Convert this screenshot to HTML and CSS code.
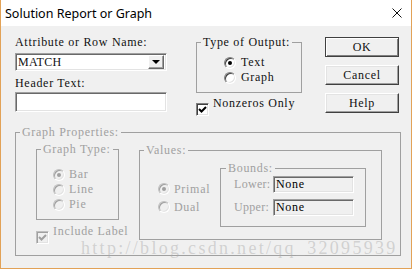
FILE: index.html
```html
<!DOCTYPE html>
<html lang="en">
<head>
  <meta charset="UTF-8" />
  <title>Solution Report or Graph</title>
  <link rel="stylesheet" href="styles.css">
</head>
<body>
  <div class="window">
    <div class="titlebar">
      <span>Solution Report or Graph</span>
      <svg class="close" width="10" height="10" viewBox="0 0 10 10">
        <path d="M0.5 0.5 L9.5 9.5 M9.5 0.5 L0.5 9.5" stroke="#111" stroke-width="1" fill="none"/>
      </svg>
    </div>

    <div class="client">
      <div class="top">
        <div class="col-left">
          <div class="lbl">Attribute or Row Name:</div>
          <div class="combo sunken">
            <span class="combo-text">MATCH</span>
            <span class="drop"><span class="tri"></span></span>
          </div>
          <div class="lbl lbl-header">Header Text:</div>
          <div class="textbox sunken"></div>
        </div>

        <div class="col-mid">
          <fieldset class="group out">
            <legend>Type of Output:</legend>
            <div class="out-body">
              <div class="opt"><span class="radio on"></span>Text</div>
              <div class="opt"><span class="radio"></span>Graph</div>
            </div>
          </fieldset>
          <div class="check-row">
            <span class="check on">
              <svg width="9" height="9" viewBox="0 0 9 9"><path d="M1 4 L3.5 6.5 L8 2" stroke="#000" stroke-width="2" fill="none"/></svg>
            </span>Nonzeros Only
          </div>
        </div>

        <div class="col-btn">
          <div class="btn default">OK</div>
          <div class="btn">Cancel</div>
          <div class="btn">Help</div>
        </div>
      </div>

      <fieldset class="group graph disabled">
        <legend>Graph Properties:</legend>
        <div class="graph-body">
          <div class="gcol">
            <fieldset class="group gtype">
              <legend>Graph Type:</legend>
              <div class="gtype-body">
                <div class="opt"><span class="radio on"></span>Bar</div>
                <div class="opt"><span class="radio"></span>Line</div>
                <div class="opt"><span class="radio"></span>Pie</div>
              </div>
            </fieldset>
            <div class="check-row inc">
              <span class="check on">
                <svg width="9" height="9" viewBox="0 0 9 9"><path d="M1 4 L3.5 6.5 L8 2" stroke="#a0a0a0" stroke-width="2" fill="none"/></svg>
              </span>Include Label
            </div>
          </div>

          <fieldset class="group values">
            <legend>Values:</legend>
            <div class="values-body">
              <div class="vradios">
                <div class="opt"><span class="radio on"></span>Primal</div>
                <div class="opt"><span class="radio"></span>Dual</div>
              </div>
              <fieldset class="group bounds">
                <legend>Bounds:</legend>
                <div class="bounds-body">
                  <div class="brow"><span class="blbl">Lower:</span><span class="field sunken">None</span></div>
                  <div class="brow"><span class="blbl">Upper:</span><span class="field sunken">None</span></div>
                </div>
              </fieldset>
            </div>
          </fieldset>
        </div>
      </fieldset>
    </div>

    <div class="watermark">http://blog.csdn.net/qq_32095939</div>
  </div>
</body>
</html>
```

FILE: styles.css
```css
* {
  box-sizing: border-box;
}

body {
  margin: 0;
  width: 412px;
  height: 269px;
  background: #fff;
  font-family: "Liberation Serif", serif;
  font-size: 12px;
  letter-spacing: 0.7px;
  color: #111;
}

.window {
  position: relative;
  width: 412px;
  height: 269px;
  border: 1px solid #e2a257;
  border-top: none;
  background: #f0f0f0;
  display: flex;
  flex-direction: column;
}

.titlebar {
  height: 26px;
  flex: none;
  background: #fff;
  display: flex;
  align-items: center;
  justify-content: space-between;
  padding: 0 9px 0 4px;
  font-family: "Noto Sans", sans-serif;
  font-size: 12.5px;
  letter-spacing: 0;
  color: #000;
}

.client {
  flex: 1;
  padding: 10px 11px 0 14px;
}

.top {
  display: flex;
  align-items: flex-start;
}

.col-left {
  width: 152px;
}

.lbl {
  line-height: 13px;
  height: 13px;
  white-space: pre;
}

.lbl-header {
  margin-top: 6px;
}

.sunken {
  border: 1px solid;
  border-color: #a0a0a0 #fff #fff #a0a0a0;
  box-shadow: inset 1px 1px #696969, inset -1px -1px #e3e3e3;
  background: #fff;
}

.combo {
  margin-top: 4px;
  height: 18px;
  display: flex;
  align-items: center;
  padding: 2px;
}

.combo-text {
  flex: 1;
  line-height: 14px;
  letter-spacing: 0.3px;
}

.drop {
  width: 16px;
  height: 14px;
  background: #f0f0f0;
  border: 1px solid;
  border-color: #fff #696969 #696969 #fff;
  box-shadow: inset -1px -1px #a0a0a0;
  display: flex;
  align-items: center;
  justify-content: center;
}

.tri {
  width: 0;
  height: 0;
  border-left: 4px solid transparent;
  border-right: 4px solid transparent;
  border-top: 4px solid #000;
}

.textbox {
  margin-top: 2px;
  height: 20px;
}

.col-mid {
  margin-left: 29px;
  width: 106px;
}

.group {
  margin: 0;
  padding: 0;
  min-width: 0;
  border: 1px solid #a0a0a0;
}

.group legend {
  padding: 0 2px;
  margin-left: 4px;
  line-height: 13px;
}

.out-body {
  padding: 6px 0 7px 27px;
}

.opt {
  display: flex;
  align-items: center;
  gap: 5px;
  height: 15px;
  white-space: pre;
}

.radio {
  width: 12px;
  height: 12px;
  border-radius: 50%;
  border: 1px solid;
  border-color: #808080 #fff #fff #808080;
  box-shadow: inset 1px 1px #404040, inset -1px -1px #e3e3e3;
  background: #fff;
  display: flex;
  align-items: center;
  justify-content: center;
  flex: none;
}

.radio.on::after {
  content: "";
  width: 4px;
  height: 4px;
  border-radius: 50%;
  background: #000;
}

.check-row {
  margin-top: 10px;
  display: flex;
  align-items: center;
  gap: 4px;
  height: 13px;
  line-height: 13px;
  white-space: pre;
}

.check {
  width: 13px;
  height: 13px;
  border: 1px solid;
  border-color: #808080 #fff #fff #808080;
  box-shadow: inset 1px 1px #404040, inset -1px -1px #e3e3e3;
  background: #fff;
  display: flex;
  align-items: center;
  justify-content: center;
  flex: none;
}

.col-btn {
  margin-left: auto;
  margin-right: 1px;
  width: 74px;
  padding-top: 1px;
  display: flex;
  flex-direction: column;
  gap: 8px;
}

.btn {
  height: 20px;
  display: flex;
  align-items: center;
  justify-content: center;
  background: #f0f0f0;
  border: 1px solid;
  border-color: #fff #404040 #404040 #fff;
  box-shadow: inset -1px -1px #a0a0a0, inset 1px 1px #e3e3e3;
}

.btn.default {
  border-color: #404040;
  box-shadow: inset 1px 1px #fff, inset -1px -1px #808080;
}

/* disabled graph section */
.disabled,
.disabled .group {
  color: #a0a0a0;
}

.graph {
  margin-top: 10px;
  width: 386px;
}

.graph-body {
  display: flex;
  align-items: flex-start;
  padding: 4px 0 11px 20px;
}

.gcol {
  width: 83px;
  flex: none;
  display: flex;
  flex-direction: column;
}

.gtype {
  width: 83px;
}

.gtype-body {
  padding: 11px 0 7px 16px;
}

.gtype .opt {
  gap: 4px;
}

.disabled .radio,
.disabled .check {
  background: #f0f0f0;
  border-color: #c0c0c0 #fff #fff #c0c0c0;
  box-shadow: inset 1px 1px #a0a0a0, inset -1px -1px #e3e3e3;
}

.disabled .radio.on::after {
  background: #a0a0a0;
}

.inc {
  margin-top: 11px;
  gap: 4px;
}

.values {
  margin-left: 20px;
  margin-top: 1px;
  width: 243px;
  flex: none;
}

.values-body {
  display: flex;
  align-items: flex-start;
  padding: 5px 0 12px 18px;
}

.vradios {
  width: 62px;
  flex: none;
  margin-top: 18px;
}

.vradios .opt {
  height: 18px;
  gap: 4px;
}

.bounds {
  width: 146px;
  flex: none;
}

.bounds legend {
  margin-left: 5px;
}

.bounds-body {
  padding: 1px 0 10px 13px;
  display: flex;
  flex-direction: column;
  gap: 6px;
}

.brow {
  display: flex;
  align-items: center;
  gap: 3px;
}

.blbl {
  width: 36px;
  min-width: 0;
  flex: none;
  white-space: pre;
  letter-spacing: 0.3px;
}

.field {
  width: 81px;
  height: 17px;
  flex: none;
  background: #f0f0f0;
  color: #000;
  line-height: 15px;
  padding-left: 2px;
}

.watermark {
  position: absolute;
  left: 80px;
  top: 238px;
  font-family: "Liberation Serif", serif;
  font-size: 18px;
  letter-spacing: 2.3px;
  color: rgba(170, 170, 170, 0.45);
  white-space: pre;
  pointer-events: none;
}
```
